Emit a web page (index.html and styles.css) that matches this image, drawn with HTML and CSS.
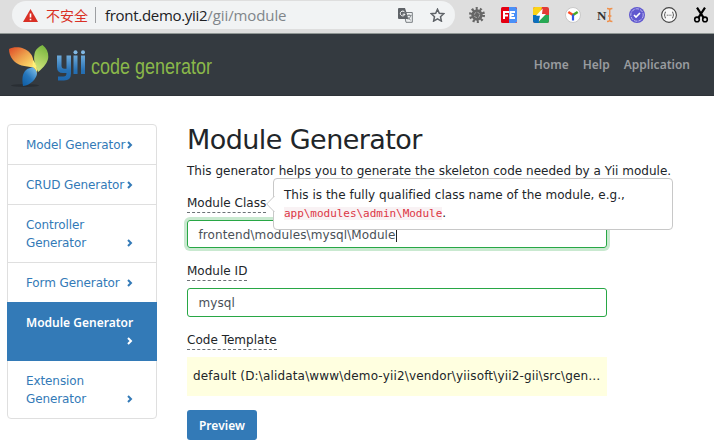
FILE: index.html
```html
<!DOCTYPE html>
<html lang="en">
<head>
<meta charset="utf-8">
<title>Module Generator</title>
<link rel="stylesheet" href="styles.css">
</head>
<body>
<div class="browser">
  <div class="address">
    <svg class="warning" width="15" height="13" viewBox="0 0 15 13"><path d="M7.5 0 15 13H0Z" fill="#d93025"/><path d="M6.7 4.5h1.6v4H6.7zM6.7 9.7h1.6v1.6H6.7z" fill="#fff"/></svg>
    <span class="insecure">不安全</span>
    <span class="divider"></span>
    <span class="url"><span class="host">front.demo.yii2</span><span class="path">/gii/module</span></span>
    <svg class="translate" width="15" height="15" viewBox="0 0 15 15"><path d="M6 4.500h8.300v9.800H8z" fill="#f1f3f4" stroke="#777c80"/><path d="M1 0h6l3.400 11H1a1 1 0 0 1-1-1V1a1 1 0 0 1 1-1z" fill="#5f6368"/><path d="M6.800 4.300A2.400 2.400 0 1 0 7 6.200H4.700" fill="none" stroke="#fff"/><path d="M8.600 7.400h5M11 6.200v1.200M12.700 7.600c-.5 2-2 3.600-3 4M9.600 8.800c.7 1.400 2 2.700 3.200 3.400" fill="none" stroke="#777c80" stroke-width=".9"/></svg>
    <svg class="star" width="15" height="14" viewBox="0 0 15 14"><path d="m7.500 1.200 1.800 4 4.500.5-3.300 3 .9 4.400-3.900-2.300-3.900 2.300.9-4.400-3.300-3 4.500-.5z" fill="none" stroke="#5f6368" stroke-width="1.500"/></svg>
  </div>
  <div class="extensions">
    <svg viewBox="0 0 16 16"><circle cx="8" cy="8" r="6.500" fill="none" stroke="#666" stroke-width="3" stroke-dasharray="2 2.080"/><circle cx="8" cy="8" r="5.700" fill="#666"/><circle cx="8" cy="8" r="2.700" fill="none" stroke="#aaa" stroke-dasharray="3 1.300"/><circle cx="8" cy="8" r="1.800" fill="#666"/></svg>
    <svg viewBox="0 0 16 16"><rect width="16" height="16" rx="1.500" fill="#e50012"/><path d="M8 0h6.500L16 1.500v13L14.500 16H8z" fill="#4a90f7"/><path d="M3 12V5h5M3 8.500h4M14 5H9.500v6H14M9.500 8H13" fill="none" stroke="#fff" stroke-width="2"/></svg>
    <svg viewBox="0 0 16 16"><rect width="16" height="16" rx="2" fill="#e23a35"/><path d="M2 0h7L7 8H0V2q0-2 2-2" fill="#fbd317"/><path d="M0 8h8l-2 8H2q-2 0-2-2z" fill="#0b70bc"/><path d="M8 8h8v6q0 2-2 2H6z" fill="#28a955"/><path d="M9.700 1.500 3 8.800h4L5.700 14.500 13 7H9z" fill="#fff"/></svg>
    <svg viewBox="0 0 16 16"><circle cx="8" cy="8" r="7.500" fill="#fff" stroke="#c9c9c9"/><path d="m8 8-4.700-3" stroke="#ff4b24" stroke-width="2.600"/><path d="m8 8 4.700-3" stroke="#4aa928" stroke-width="2.600"/><path d="M8 7.500v6" stroke="#3158e7" stroke-width="2.200"/></svg>
    <svg viewBox="0 0 16 16"><text class="letter" x="0" y="12.500">N</text><path d="M10 1.500q2 0 2.700 1 .7-1 2.700-1M12.700 2v12M10 14.500q2 0 2.700-1 .7 1 2.700 1M11 9h3.400" fill="none" stroke="#ef914d" stroke-width="1.400"/></svg>
    <svg viewBox="0 0 16 16"><circle cx="8" cy="8" r="8" fill="#6058cf"/><circle cx="8" cy="8" r="6.200" fill="none" stroke="#bbb8ed" stroke-dasharray="3.500 1"/><path d="m5 8 2 2 4-4" fill="none" stroke="#fff" stroke-width="1.600"/></svg>
    <svg viewBox="0 0 16 16"><circle cx="8" cy="8" r="7.400" fill="#f8f8f8" stroke="#444" stroke-width="1.100"/><path d="M5 5q-1.300 0-1.100 1.500Q4 8 3 8q1 0 .9 1.500Q3.700 11 5 11M11 5q1.300 0 1.100 1.500Q12 8 13 8q-1 0-.9 1.500.2 1.500-1.100 1.500" fill="none" stroke="#555"/><path d="M5.800 8.200h4.700" stroke="#555" stroke-dasharray="1 .8"/></svg>
    <svg viewBox="0 0 16 16"><path d="m4 .7 6.700 10.200M12 .7 5.300 10.900" stroke="#000" stroke-width="2.200"/><circle cx="4" cy="12.400" r="2.300" fill="none" stroke="#000" stroke-width="1.600"/><circle cx="12" cy="12.400" r="2.300" fill="none" stroke="#000" stroke-width="1.600"/></svg>
  </div>
</div>
<header class="navbar">
  <svg class="logo" width="260" height="52" viewBox="0 0 260 52">
    <defs>
      <linearGradient id="orange" x2="1" y2="1"><stop stop-color="#df4825"/><stop offset=".5" stop-color="#eda04c"/><stop offset="1" stop-color="#ffe66f"/></linearGradient>
      <linearGradient id="green" x1=".6" y1="0" x2=".3" y2="1"><stop stop-color="#78b63e"/><stop offset="1" stop-color="#d7e780"/></linearGradient>
      <linearGradient id="blue" x1="1" y1="0" x2=".2" y2="1"><stop stop-color="#8bc9f1"/><stop offset=".6" stop-color="#2676bb"/><stop offset="1" stop-color="#1261a7"/></linearGradient>
      <linearGradient id="word" x1="0" y1="12" x2="0" y2="42" gradientUnits="userSpaceOnUse"><stop stop-color="#83bce6"/><stop offset=".65" stop-color="#2771b4"/><stop offset="1" stop-color="#1d66ad"/></linearGradient>
    </defs>
    <ellipse cx="17" cy="46.500" rx="14" ry="1.400" fill="#292e33"/>
    <path d="M1 10C7 7 17 8 22 14c3 3 4 8 3.500 14C17 28 9 26 5 21 2 17 1 14 1 10z" fill="url(#orange)"/>
    <path d="M34.500 6c4 3 6 7 5.800 12-.3 5-4 10-10.300 15C28 27 25 22 26.500 15c1-5 4-7 8-9z" fill="url(#green)"/>
    <path d="M24.500 28c3 2 4.500 4 4.500 7-1 5-6 11-14 12C14 40 14 35 18 31c2-2 5-2 6.500-3z" fill="url(#blue)"/>
    <path d="M24.500 28c3 2 4.500 4 4.500 7 .5-5-.5-10-4-14z" fill="#fff078"/>
    <path d="M49 16.500h4.500v10.200q0 3 3 3h2V16.500H63v18q0 7-7 7h-6v-4h5.500q3 0 3-3.500h-3.500q-6 0-6-6zM65.500 16.500h4v18.500h-4zM73 16.500h4v18.500h-4z" fill="url(#word)"/>
    <circle cx="67.500" cy="13.300" r="2" fill="#82b9e4"/><circle cx="75" cy="13.300" r="2" fill="#82b9e4"/>
    <text x="83" y="35.300" textLength="121" lengthAdjust="spacingAndGlyphs">code generator</text>
  </svg>
  <nav><a>Home</a><a>Help</a><a>Application</a></nav>
</header>
<main class="layout">
  <aside class="menu">
    <a class="item"><span>Model Generator</span><svg class="chevron" viewBox="0 0 6 8"><path d="m1 1 3 3-3 3"/></svg></a>
    <a class="item"><span>CRUD Generator</span><svg class="chevron" viewBox="0 0 6 8"><path d="m1 1 3 3-3 3"/></svg></a>
    <a class="item"><span>Controller<br>Generator</span><svg class="chevron" viewBox="0 0 6 8"><path d="m1 1 3 3-3 3"/></svg></a>
    <a class="item"><span>Form Generator</span><svg class="chevron" viewBox="0 0 6 8"><path d="m1 1 3 3-3 3"/></svg></a>
    <a class="item active"><span>Module Generator<br>&nbsp;</span><svg class="chevron" viewBox="0 0 6 8"><path d="m1 1 3 3-3 3"/></svg></a>
    <a class="item"><span>Extension<br>Generator</span><svg class="chevron" viewBox="0 0 6 8"><path d="m1 1 3 3-3 3"/></svg></a>
  </aside>
  <section class="content">
    <h1>Module Generator</h1>
    <p>This generator helps you to generate the skeleton code needed by a Yii module.</p>
    <div class="label-row"><label class="hint-label">Module Class</label>
      <div class="popover"><svg class="arrow" width="9" height="16" viewBox="0 0 9 16"><path d="M8.500 0 .7 8l7.800 8" fill="#fff" stroke="#c8c8c8"/></svg><div class="hint-text">This is the fully qualified class name of the module, e.g.,</div><code>app\modules\admin\Module</code>.</div>
    </div>
    <div class="field focused"><span>frontend\modules\mysql\Module</span><i class="caret"></i></div>
    <div class="label-row"><label class="hint-label">Module ID</label></div>
    <div class="field"><span>mysql</span></div>
    <div class="label-row"><label class="hint-label">Code Template</label></div>
    <div class="sticky">default (D:\alidata\www\demo-yii2\vendor\yiisoft\yii2-gii\src\gen…</div>
    <button>Preview</button>
  </section>
</main>
</body>
</html>
```
FILE: styles.css
```css
* { box-sizing: border-box; }
body {
  margin: 0;
  width: 714px;
  height: 444px;
  overflow: hidden;
  background: #fff;
  color: #212529;
  font: 12px/18px "DejaVu Sans", sans-serif;
  letter-spacing: 0.02px;
}
.browser {
  display: flex;
  height: 34px;
  background: #dedede;
  border-bottom: 1px solid #8f9694;
}
.address {
  display: flex;
  align-items: center;
  width: 443px;
  height: 28px;
  margin: 1px 0 0 12px;
  padding-left: 11px;
  background: #f1f3f4;
  border-radius: 14px;
}
.warning { margin-right: 8px; }
.insecure {
  width: 43px;
  color: #d93025;
  font: 14px/26px "Noto Sans CJK SC", sans-serif;
  letter-spacing: 0;
}
.divider { width: 1px; height: 16px; margin: 0 9px 0 6px; background: #9c9ea1; }
.url { width: 190px; font: 15px/26px "Open Sans", sans-serif; color: #202124; white-space: nowrap; }
.host { letter-spacing: -0.3px; }
.path { color: #80858a; letter-spacing: -0.1px; }
.translate { margin-left: 103px; }
.star { margin-left: 17px; }
.extensions { display: flex; gap: 16px; padding: 7px 0 0 14px; }
.extensions svg { width: 16px; height: 16px; flex: none; }
.letter { font: bold 13px "Liberation Serif", serif; fill: #333; letter-spacing: 0; }
.navbar {
  display: flex;
  justify-content: space-between;
  height: 62px;
  padding: 5px 24px 0 8px;
  background: #343a40;
  border-bottom: 1px solid #2e3338;
}
.logo text { font: 22px "Liberation Sans", sans-serif; fill: #8bb84a; letter-spacing: 0; }
.navbar nav { display: flex; gap: 14px; padding-top: 17px; color: #999c9f; }
.navbar a { font: 600 12px/18px "Noto Sans", sans-serif; letter-spacing: 0; }
.layout { display: flex; gap: 30px; padding: 28px 0 0 7px; }
.menu {
  width: 150px;
  height: 295px;
  border: 1px solid #dfdfdf;
  border-radius: 4px;
  color: #337ab7;
  letter-spacing: -0.1px;
}
.item {
  display: flex;
  justify-content: space-between;
  align-items: flex-end;
  padding: 11px 23px 10px 18px;
  border-bottom: 1px solid #dfdfdf;
  white-space: nowrap;
}
.item span { flex: none; width: 101px; }
.item:last-child { border-bottom: 0; }
.item.active {
  margin: -1px -1px 0;
  padding: 12px 24px 10px 19px;
  background: #337ab7;
  border-color: #337ab7;
  color: #fff;
  font-family: "Noto Sans", sans-serif;
  font-weight: 600;
  letter-spacing: 0;
}
.chevron { flex: none; width: 6px; height: 8px; margin-bottom: 5px; fill: none; stroke: currentColor; stroke-width: 2; }
.content { width: 500px; }
h1 { margin: 0; font-size: 27px; line-height: 32px; font-weight: normal; letter-spacing: -0.57px; }
p { margin: 6px 0 13px; white-space: nowrap; }
.label-row { position: relative; display: flex; height: 27px; align-items: flex-start; }
.hint-label { height: 20px; padding-top: 1px; border-bottom: 1px dashed #6b7075; }
.field {
  display: flex;
  align-items: center;
  width: 420px;
  height: 29px;
  margin-bottom: 13px;
  padding: 1px 0 0 10.5px;
  border: 1px solid #28a745;
  border-radius: 3px;
  color: #495057;
  letter-spacing: 0.1px;
}
.focused { height: 28px; box-shadow: 0 0 0 3px #c9e9d0; }
.caret { width: 1px; height: 14px; background: #222; }
.popover {
  position: absolute;
  z-index: 2;
  left: 86px;
  top: -15px;
  width: 400px;
  height: 52px;
  padding: 7px 10px;
  border: 1px solid #c8c8c8;
  border-radius: 4px;
  background: #fff;
  white-space: nowrap;
}
.hint-text { line-height: 18px; }
.arrow { position: absolute; left: -8px; top: 17px; }
code { background: #f9f2f4; color: #dc3545; font: 11px/14px "DejaVu Sans Mono", monospace; letter-spacing: -0.03px; }
.sticky { width: 420px; height: 39px; padding: 10px 6px; background: #ffffe0; white-space: nowrap; letter-spacing: 0.16px; }
button {
  display: block;
  width: 70px;
  height: 30px;
  margin-top: 14px;
  padding: 0;
  border: 0;
  border-radius: 3px;
  background: #337ab7;
  color: #fff;
  font: 600 12px "Noto Sans", sans-serif;
  letter-spacing: 0.05px;
}
```
